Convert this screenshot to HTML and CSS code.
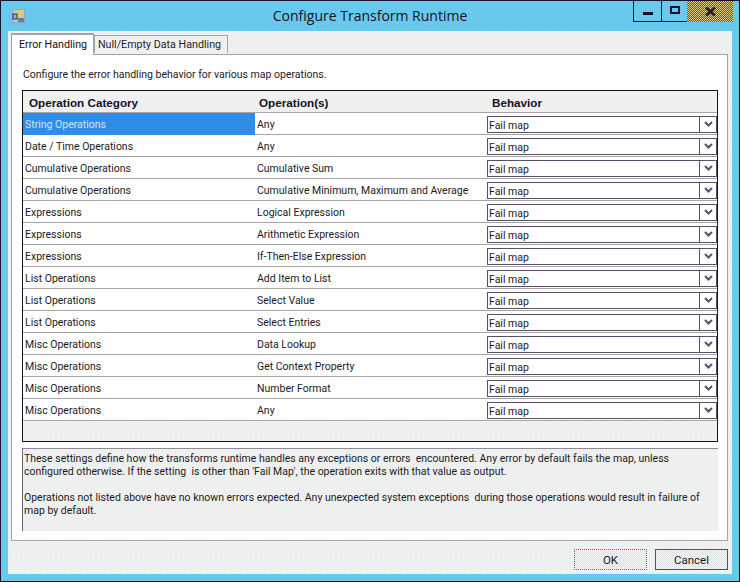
FILE: index.html
```html
<!DOCTYPE html>
<html lang="en">
<head>
<meta charset="UTF-8">
<title>Configure Transform Runtime</title>
<link rel="stylesheet" href="styles.css">
</head>
<body>
<div class="window">
    <div class="titlebar">
        <svg class="app-icon" width="13" height="14" viewBox="0 0 13 14">
            <rect x="0.5" y="0.5" width="12" height="13" fill="#a9cfdc" stroke="#8a8f98" stroke-dasharray="1 1"/>
            <rect x="5" y="1" width="7" height="7" fill="#ecc66c"/>
            <rect x="1" y="5" width="4" height="5" fill="#69c9ec" stroke="#33303f"/>
            <rect x="6" y="9" width="6" height="4" fill="#4d84c4"/>
        </svg>
        <div class="title">Configure Transform Runtime</div>
        <div class="controls">
            <div class="ctl ctl-min"><span class="min-glyph"></span></div>
            <div class="ctl ctl-max"><span class="max-glyph"></span></div>
            <div class="ctl ctl-close">
                <svg width="11" height="9" viewBox="0 0 11 9"><path d="M1 0.5 L10 8.5 M10 0.5 L1 8.5" stroke="#2a1b33" stroke-width="2.6"/></svg>
            </div>
        </div>
    </div>
    <div class="client">
        <div class="tabs">
            <div class="tab tab-active">Error Handling</div>
            <div class="tab tab-other">Null/Empty Data Handling</div>
        </div>
        <div class="panel">
            <p class="intro">Configure the error handling behavior for various map operations.</p>
            <div class="grid-box">
                <table class="grid">
                    <thead>
                        <tr><th class="c1">Operation Category</th><th class="c2">Operation(s)</th><th class="c3">Behavior</th></tr>
                    </thead>
                    <tbody>
                        <tr class="selected"><td class="c1">String Operations</td><td class="c2">Any</td><td class="c3"><div class="combo"><span class="combo-value">Fail map</span><span class="combo-arrow"><svg width="9" height="6" viewBox="0 0 9 6"><path d="M1 1 L4.5 4.5 L8 1" fill="none" stroke="#5b4e6b" stroke-width="2"/></svg></span></div></td></tr>
                        <tr><td class="c1">Date / Time Operations</td><td class="c2">Any</td><td class="c3"><div class="combo"><span class="combo-value">Fail map</span><span class="combo-arrow"><svg width="9" height="6" viewBox="0 0 9 6"><path d="M1 1 L4.5 4.5 L8 1" fill="none" stroke="#5b4e6b" stroke-width="2"/></svg></span></div></td></tr>
                        <tr><td class="c1">Cumulative Operations</td><td class="c2">Cumulative Sum</td><td class="c3"><div class="combo"><span class="combo-value">Fail map</span><span class="combo-arrow"><svg width="9" height="6" viewBox="0 0 9 6"><path d="M1 1 L4.5 4.5 L8 1" fill="none" stroke="#5b4e6b" stroke-width="2"/></svg></span></div></td></tr>
                        <tr><td class="c1">Cumulative Operations</td><td class="c2">Cumulative Minimum, Maximum and Average</td><td class="c3"><div class="combo"><span class="combo-value">Fail map</span><span class="combo-arrow"><svg width="9" height="6" viewBox="0 0 9 6"><path d="M1 1 L4.5 4.5 L8 1" fill="none" stroke="#5b4e6b" stroke-width="2"/></svg></span></div></td></tr>
                        <tr><td class="c1">Expressions</td><td class="c2">Logical Expression</td><td class="c3"><div class="combo"><span class="combo-value">Fail map</span><span class="combo-arrow"><svg width="9" height="6" viewBox="0 0 9 6"><path d="M1 1 L4.5 4.5 L8 1" fill="none" stroke="#5b4e6b" stroke-width="2"/></svg></span></div></td></tr>
                        <tr><td class="c1">Expressions</td><td class="c2">Arithmetic Expression</td><td class="c3"><div class="combo"><span class="combo-value">Fail map</span><span class="combo-arrow"><svg width="9" height="6" viewBox="0 0 9 6"><path d="M1 1 L4.5 4.5 L8 1" fill="none" stroke="#5b4e6b" stroke-width="2"/></svg></span></div></td></tr>
                        <tr><td class="c1">Expressions</td><td class="c2">If-Then-Else Expression</td><td class="c3"><div class="combo"><span class="combo-value">Fail map</span><span class="combo-arrow"><svg width="9" height="6" viewBox="0 0 9 6"><path d="M1 1 L4.5 4.5 L8 1" fill="none" stroke="#5b4e6b" stroke-width="2"/></svg></span></div></td></tr>
                        <tr><td class="c1">List Operations</td><td class="c2">Add Item to List</td><td class="c3"><div class="combo"><span class="combo-value">Fail map</span><span class="combo-arrow"><svg width="9" height="6" viewBox="0 0 9 6"><path d="M1 1 L4.5 4.5 L8 1" fill="none" stroke="#5b4e6b" stroke-width="2"/></svg></span></div></td></tr>
                        <tr><td class="c1">List Operations</td><td class="c2">Select Value</td><td class="c3"><div class="combo"><span class="combo-value">Fail map</span><span class="combo-arrow"><svg width="9" height="6" viewBox="0 0 9 6"><path d="M1 1 L4.5 4.5 L8 1" fill="none" stroke="#5b4e6b" stroke-width="2"/></svg></span></div></td></tr>
                        <tr><td class="c1">List Operations</td><td class="c2">Select Entries</td><td class="c3"><div class="combo"><span class="combo-value">Fail map</span><span class="combo-arrow"><svg width="9" height="6" viewBox="0 0 9 6"><path d="M1 1 L4.5 4.5 L8 1" fill="none" stroke="#5b4e6b" stroke-width="2"/></svg></span></div></td></tr>
                        <tr><td class="c1">Misc Operations</td><td class="c2">Data Lookup</td><td class="c3"><div class="combo"><span class="combo-value">Fail map</span><span class="combo-arrow"><svg width="9" height="6" viewBox="0 0 9 6"><path d="M1 1 L4.5 4.5 L8 1" fill="none" stroke="#5b4e6b" stroke-width="2"/></svg></span></div></td></tr>
                        <tr><td class="c1">Misc Operations</td><td class="c2">Get Context Property</td><td class="c3"><div class="combo"><span class="combo-value">Fail map</span><span class="combo-arrow"><svg width="9" height="6" viewBox="0 0 9 6"><path d="M1 1 L4.5 4.5 L8 1" fill="none" stroke="#5b4e6b" stroke-width="2"/></svg></span></div></td></tr>
                        <tr><td class="c1">Misc Operations</td><td class="c2">Number Format</td><td class="c3"><div class="combo"><span class="combo-value">Fail map</span><span class="combo-arrow"><svg width="9" height="6" viewBox="0 0 9 6"><path d="M1 1 L4.5 4.5 L8 1" fill="none" stroke="#5b4e6b" stroke-width="2"/></svg></span></div></td></tr>
                        <tr><td class="c1">Misc Operations</td><td class="c2">Any</td><td class="c3"><div class="combo"><span class="combo-value">Fail map</span><span class="combo-arrow"><svg width="9" height="6" viewBox="0 0 9 6"><path d="M1 1 L4.5 4.5 L8 1" fill="none" stroke="#5b4e6b" stroke-width="2"/></svg></span></div></td></tr>
                    </tbody>
                </table>
            </div>
            <div class="notes">
                <p>These settings define how the transforms runtime handles any exceptions or errors&nbsp; encountered. Any error by default fails the map, unless<br>configured otherwise. If the setting&nbsp; is other than 'Fail Map', the operation exits with that value as output.</p>
                <p>Operations not listed above have no known errors expected. Any unexpected system exceptions&nbsp; during those operations would result in failure of<br>map by default.</p>
            </div>
        </div>
        <div class="buttons">
            <button class="btn btn-default">OK</button>
            <button class="btn">Cancel</button>
        </div>
    </div>
</div>
</body>
</html>
```

FILE: styles.css
```css
html, body {
    margin: 0;
    padding: 0;
}
body {
    width: 740px;
    height: 582px;
    overflow: hidden;
    font-family: Roboto, "Liberation Sans", sans-serif;
    font-size: 10.5px;
    color: #1c1a24;
}
.window {
    box-sizing: border-box;
    width: 740px;
    height: 582px;
    display: flex;
    flex-direction: column;
    background-color: #69c9ec;
    border: 1px solid #1a1228;
    padding: 0 7px 7px 7px;
}
.titlebar {
    height: 30px;
    flex: none;
    display: grid;
    grid-template-columns: 1fr auto 1fr;
    margin: 0 -7px;
}
.app-icon {
    margin: 8px 0 0 11px;
}
.title {
    font-family: "Open Sans", sans-serif;
    font-size: 14px;
    line-height: 30px;
    color: #15121e;
}
.controls {
    display: flex;
    justify-content: flex-end;
    align-items: flex-start;
    padding-right: 6px;
}
.ctl {
    box-sizing: border-box;
    height: 21px;
    display: flex;
    align-items: center;
    justify-content: center;
    border-left: 1px solid #1a1228;
    border-bottom: 1px solid #1a1228;
}
.ctl-min {
    width: 28px;
}
.ctl-max {
    width: 26px;
}
.ctl-close {
    width: 46px;
    border-left: 0;
    border-bottom: 0;
    background: repeating-conic-gradient(#6a5a70 0 25%, #d4c27a 0 50%) 0 0 / 2px 2px;
}
.min-glyph {
    width: 10px;
    height: 3px;
    margin-top: 5px;
    background-color: #1a1228;
}
.max-glyph {
    box-sizing: border-box;
    width: 10px;
    height: 8px;
    margin-top: -2px;
    border: 2px solid #1a1228;
}

.client {
    flex: 1;
    display: flex;
    flex-direction: column;
    padding: 3px 4px 0 3px;
    background-color: #eef0ef;
    background-image: radial-gradient(circle at 0.5px 0.5px, #fff 0.5px, transparent 0.7px);
    background-size: 5px 6px;
}
.tabs {
    display: flex;
    align-items: flex-end;
    height: 20px;
    position: relative;
    z-index: 1;
}
.tab {
    box-sizing: border-box;
    height: 18px;
    margin-bottom: 1px;
    border: 1px solid #a3a3a8;
    border-bottom: 0;
    background-color: #f0f0ee;
    color: #26222e;
    font-size: 10.7px;
}
.tab-other {
    width: 134px;
    line-height: 18px;
    padding-left: 3px;
}
.tab-active {
    width: 83px;
    height: 22px;
    line-height: 19px;
    padding-left: 7px;
    margin-bottom: -1px;
    border-width: 2px 1px 0 1px;
    background-color: #fff;
    color: #14111c;
}
.panel {
    height: 487px;
    box-sizing: border-box;
    padding: 13px 9px 0 10px;
    background-color: #fff;
    border: 1px solid #a3a3a8;
}
.intro {
    margin: 0 0 8px 1px;
    line-height: 14px;
}
.grid-box {
    box-sizing: border-box;
    height: 352px;
    border: 1px solid #17121f;
    background-color: #eef0ef;
    background-image: radial-gradient(circle at 0.5px 0.5px, #fff 0.5px, transparent 0.7px);
    background-size: 5px 6px;
}
.grid {
    width: 100%;
    table-layout: fixed;
    border-collapse: collapse;
}
.grid th.c1, .grid td.c1 {
    width: 232px;
}
.grid th.c2, .grid td.c2 {
    width: 231px;
}
.grid th {
    box-sizing: border-box;
    height: 21px;
    padding: 2px 0 0 6px;
    text-align: left;
    font-family: "Liberation Sans", sans-serif;
    font-size: 11.7px;
    color: #17121f;
    border-bottom: 1px solid #a5a5a9;
    background: repeating-conic-gradient(#f6f7f6 0 25%, #e8eaea 0 50%) 0 0 / 2px 2px;
}
.grid th.c2 {
    padding-left: 4px;
}
.grid td {
    box-sizing: border-box;
    height: 22px;
    padding: 2px 0 0 2px;
    background-color: #fff;
    border-bottom: 1px solid #a5a5a9;
}
.grid td.c3 {
    padding: 0 0 0 1px;
}
.selected .c1 {
    color: #cfe4f6;
}
.grid .selected td.c1 {
    background-color: #2f8de8;
    border-bottom-color: #2f8de8;
}
.combo {
    box-sizing: border-box;
    height: 17px;
    margin-top: 2px;
    display: flex;
    border: 1px solid #5a4f69;
    background-color: #fff;
}
.combo-value {
    flex: 1;
    line-height: 17px;
    padding-left: 1px;
}
.combo-arrow {
    width: 16px;
    display: flex;
    align-items: center;
    justify-content: center;
    border-left: 1px solid #5a4f69;
}
.notes {
    box-sizing: border-box;
    height: 83px;
    margin-top: 6px;
    padding: 3px 0 0 1px;
    line-height: 13px;
    border-top: 1px solid #8d8a96;
    border-left: 1px solid #6a6675;
    background-color: #eef0ef;
    color: #1d1a25;
}
.notes p {
    margin: 0 0 13px 0;
}
.buttons {
    display: flex;
    justify-content: flex-end;
    gap: 8px;
    margin-top: 8px;
}
.btn {
    box-sizing: border-box;
    width: 73px;
    height: 21px;
    padding: 0;
    font-family: inherit;
    font-size: 11.5px;
    color: #1d1a25;
    border: 1px solid #5a4f69;
    background: repeating-conic-gradient(#f7f7f6 0 25%, #dedfe0 0 50%) 0 0 / 2px 2px;
}
.btn-default {
    border: 1px dotted #2f6fc0;
}
```
